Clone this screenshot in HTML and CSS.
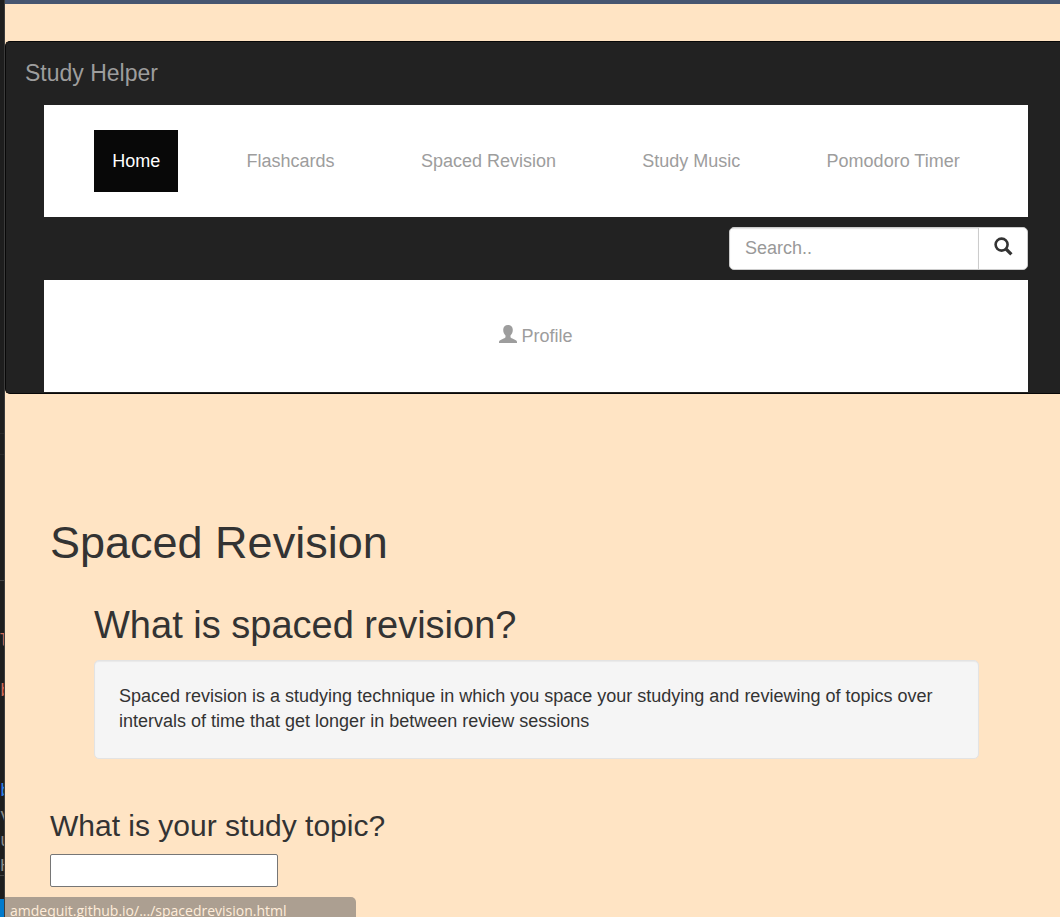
FILE: index.html
```html
<!DOCTYPE html>
<html lang="en">

<head>
  <meta charset="utf-8">
  <meta name="viewport" content="width=device-width, initial-scale=1">
  <title>Study Helper</title>
  <link rel="stylesheet" href="styles.css">
</head>

<body>
  <div class="editor" aria-hidden="true">
    <div class="panel"></div>
    <div class="panel panel-small"></div>
    <div class="panel panel-tall"></div>
    <pre class="code"><span class="red">l</span>

<span class="red">b</span>



<span class="blue">b</span>
v
u
H</pre>
    <div class="editor-footer"></div>
    <div class="editor-status"></div>
  </div>

  <div class="page">
    <nav class="navbar">
      <a class="navbar-brand" href="#">Study Helper</a>
      <div class="navbar-content">
        <ul class="nav">
          <li><a class="active" href="#">Home</a></li>
          <li><a href="#">Flashcards</a></li>
          <li><a href="#">Spaced Revision</a></li>
          <li><a href="#">Study Music</a></li>
          <li><a href="#">Pomodoro Timer</a></li>
        </ul>
        <form class="search" role="search">
          <input type="text" placeholder="Search.." aria-label="Search">
          <button type="button" aria-label="Search">
            <svg width="20" height="20" viewBox="0 0 20 20">
              <circle cx="8.6" cy="7.6" r="6" fill="none" stroke="currentColor" stroke-width="2.6" />
              <path d="M13 12L18.4 17.4" fill="none" stroke="currentColor" stroke-width="3.2" />
            </svg>
          </button>
        </form>
        <ul class="nav">
          <li>
            <a href="#">
              <svg width="18" height="18" viewBox="0 0 18 18">
                <path d="M9 0C6.2 0 4.2 1.8 4.2 4.8C4.2 7.2 5 9.2 6.5 10.4V12C6.5 12.7 5.8 13 4.6 13.5L1.6 14.9C.5 15.4 0 16 0 17V18H18V17C18 16 17.5 15.4 16.4 14.9L13.4 13.5C12.2 13 11.5 12.7 11.5 12V10.4C13 9.2 13.8 7.2 13.8 4.8C13.8 1.8 11.8 0 9 0Z" fill="currentColor" />
              </svg>
              Profile
            </a>
          </li>
        </ul>
      </div>
    </nav>

    <main class="content">
      <h1>Spaced Revision</h1>
      <section class="about">
        <h2>What is spaced revision?</h2>
        <p class="well">Spaced revision is a studying technique in which you space your studying and reviewing of topics over intervals of time that get longer in between review sessions</p>
      </section>
      <h3><label for="topic">What is your study topic?</label></h3>
      <input class="topic" type="text" id="topic">
    </main>
  </div>

  <div class="link-status">amdequit.github.io/.../spacedrevision.html</div>
</body>

</html>
```

FILE: styles.css
```css
* {
  box-sizing: border-box;
}

body {
  display: flex;
  min-height: 100vh;
  margin: 0;
  background: bisque;
  color: #333;
  font-family: "Liberation Sans", Arial, sans-serif;
  font-size: 18px;
  line-height: 25px;
}

a {
  color: #9d9d9d;
  text-decoration: none;
}

/* Editor window behind the page */
.editor {
  display: flex;
  flex: none;
  flex-direction: column;
  justify-content: flex-end;
  width: 5px;
  overflow: hidden;
  background: #1e1e1e;
  border-right: 1px solid #3c3c3c;
}

.panel {
  border-bottom: 1px solid #292929;
}

.panel-small {
  height: 21px;
}

.panel-tall {
  height: 126px;
  border-color: #444;
}

.code {
  margin: 0;
  padding-top: 48px;
  color: #8a8a8a;
  font-family: "Liberation Mono", monospace;
  font-size: 18px;
  text-indent: -2px;
}

.red {
  color: #d16955;
}

.blue {
  color: #2f81e8;
}

.editor-footer {
  height: 24px;
  margin-top: -4px;
  border-top: 1px solid #444;
}

.editor-status {
  height: 18px;
  background: #007acc;
}

.page {
  flex: 1;
  min-width: 0;
  border-top: 4px solid #475671;
}

/* Navbar */
.navbar {
  margin-top: 37px;
  padding-bottom: 1px;
  background: #222;
  border: 1px solid #080808;
  border-right: 0;
  border-radius: 5px 0 0 5px;
}

.navbar-brand {
  display: block;
  padding: 19px;
  font-size: 23px;
}

.navbar-content {
  display: flex;
  flex-direction: column;
  gap: 10px;
  padding: 0 32px 0 38px;
}

.nav {
  display: flex;
  justify-content: space-evenly;
  margin: 0;
  padding: 25px 0;
  background: white;
  list-style: none;
}

.nav a {
  display: flex;
  align-items: center;
  gap: 4px;
  height: 62px;
  padding: 0 18px;
}

.nav .active {
  background: #080808;
  color: white;
}

.nav svg {
  margin-bottom: 4px;
}

.search {
  display: flex;
  align-self: flex-end;
  width: 299px;
  height: 43px;
  background: white;
  border: 1px solid #ccc;
  border-radius: 5px;
}

.search input {
  flex: 1;
  min-width: 0;
  padding: 0 15px;
  background: none;
  border: 0;
  box-shadow: inset 0 1px 1px rgba(0, 0, 0, 0.1);
  color: #555;
  font: inherit;
}

.search input::placeholder {
  color: #999;
}

.search button {
  width: 49px;
  padding: 0;
  background: none;
  border: 0;
  border-left: 1px solid #ccc;
  color: #333;
}

/* Content */
.content {
  padding: 124px 37px 30px 45px;
}

h1,
h2,
h3 {
  margin: 0;
  font-weight: 500;
}

h1 {
  margin-bottom: 36px;
  font-size: 45px;
  line-height: 50px;
}

h2 {
  margin-bottom: 14px;
  font-size: 38px;
  line-height: 42px;
}

h3 {
  margin-bottom: 12px;
  font-size: 30px;
  line-height: 33px;
}

.about {
  margin: 0 44px 50px;
}

.well {
  margin: 0;
  padding: 23px 24px 24px;
  background: #f5f5f5;
  border: 1px solid #e3e3e3;
  border-radius: 5px;
  box-shadow: inset 0 1px 1px rgba(0, 0, 0, 0.05);
}

.topic {
  display: block;
  width: 228px;
  height: 33px;
  padding: 0 4px;
  background: white;
  border: 1px solid #767676;
  border-radius: 2px;
  font: inherit;
}

/* Link preview over the bottom corner */
.link-status {
  position: fixed;
  bottom: 0;
  left: 5px;
  width: 351px;
  height: 20px;
  padding: 1px 5px 0;
  overflow: hidden;
  background: #ac9f91;
  border-top-right-radius: 5px;
  color: #ffedda;
  font-family: "Open Sans", "Noto Sans", sans-serif;
  font-size: 14px;
  white-space: nowrap;
}
```
